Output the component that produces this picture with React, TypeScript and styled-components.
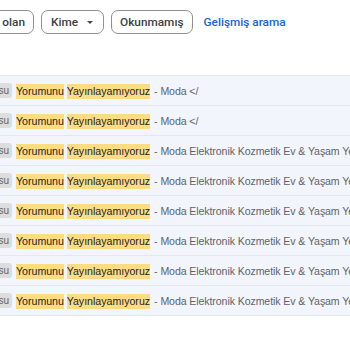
import React from "react";
import styled, { createGlobalStyle } from "styled-components";

const Global = createGlobalStyle`
  html, body { margin: 0; padding: 0; background: #ffffff; }
  body { width: 350px; height: 350px; overflow: hidden; }
`;

const Page = styled.div`
  width: 350px;
  height: 350px;
  overflow: hidden;
  background: #ffffff;
`;

const Toolbar = styled.div`
  display: flex;
  align-items: center;
  gap: 7px;
  padding-top: 10px;
  height: 24px;
`;

const Clip = styled.div<{ $w: number }>`
  flex: none;
  width: ${(p) => p.$w}px;
  overflow: hidden;
  display: flex;
  justify-content: flex-end;
`;

const Chip = styled.button`
  flex: none;
  box-sizing: border-box;
  height: 24px;
  display: flex;
  align-items: center;
  gap: 9px;
  padding: 0 8px;
  border: 1px solid #8e918f;
  border-radius: 7px;
  background: #ffffff;
  color: #3c4043;
  font-family: "Roboto", "Liberation Sans", sans-serif;
  font-weight: 500;
  font-size: 11.8px;
  white-space: nowrap;
`;

const DropChip = styled(Chip)`
  padding: 0 10px 0 9px;
`;

const Caret = styled.span`
  width: 0;
  height: 0;
  border-left: 3.5px solid transparent;
  border-right: 3.5px solid transparent;
  border-top: 3.5px solid #444746;
`;

const LinkText = styled.a`
  margin-left: 4px;
  color: #1a62d6;
  font-family: "Roboto", "Liberation Sans", sans-serif;
  font-weight: 500;
  font-size: 11.8px;
  white-space: nowrap;
`;

const List = styled.div`
  margin-top: 41px;
  border-top: 1px solid #e3e8ee;
`;

const Row = styled.div`
  box-sizing: border-box;
  height: 30px;
  display: flex;
  align-items: center;
  gap: 4px;
  background: #f2f6fc;
  border-bottom: 1px solid #e3e8ee;
  overflow: hidden;
  white-space: nowrap;
  font-family: "Liberation Sans", Arial, sans-serif;
  font-size: 10.6px;
`;

const Label = styled.span`
  flex: none;
  display: inline-flex;
  align-items: center;
  height: 15px;
  padding: 0 3px;
  border-radius: 3px;
  background: #dddddd;
  color: #666666;
  font-size: 10px;
`;

const Subject = styled.span`
  color: #1f1f1f;
`;

const Mark = styled.mark`
  background: #fddc84;
  color: #1f1f1f;
  padding: 1px 0 2px;
`;

const Snippet = styled.span`
  color: #5f6368;
  letter-spacing: -0.1px;
`;

const snippets = [
  "Moda </",
  "Moda </",
  "Moda Elektronik Kozmetik Ev & Yaşam Yeni Sezon",
  "Moda Elektronik Kozmetik Ev & Yaşam Yeni Sezon",
  "Moda Elektronik Kozmetik Ev & Yaşam Yeni Sezon",
  "Moda Elektronik Kozmetik Ev & Yaşam Yeni Sezon",
  "Moda Elektronik Kozmetik Ev & Yaşam Yeni Sezon",
  "Moda Elektronik Kozmetik Ev & Yaşam Yeni Sezon",
];

export default function App() {
  return (
    <Page>
      <Global />
      <Toolbar>
        <Clip $w={34}>
          <Chip>Ekli dosyası olan</Chip>
        </Clip>
        <DropChip>
          Kime <Caret />
        </DropChip>
        <Chip>Okunmamış</Chip>
        <LinkText>Gelişmiş arama</LinkText>
      </Toolbar>
      <List>
        {snippets.map((s, i) => (
          <Row key={i}>
            <Clip $w={12}>
              <Label>Gelen Kutusu</Label>
            </Clip>
            <Subject>
              <Mark>Yorumunu</Mark> <Mark>Yayınlayamıyoruz</Mark>
            </Subject>
            <Snippet>- {s}</Snippet>
          </Row>
        ))}
      </List>
    </Page>
  );
}
